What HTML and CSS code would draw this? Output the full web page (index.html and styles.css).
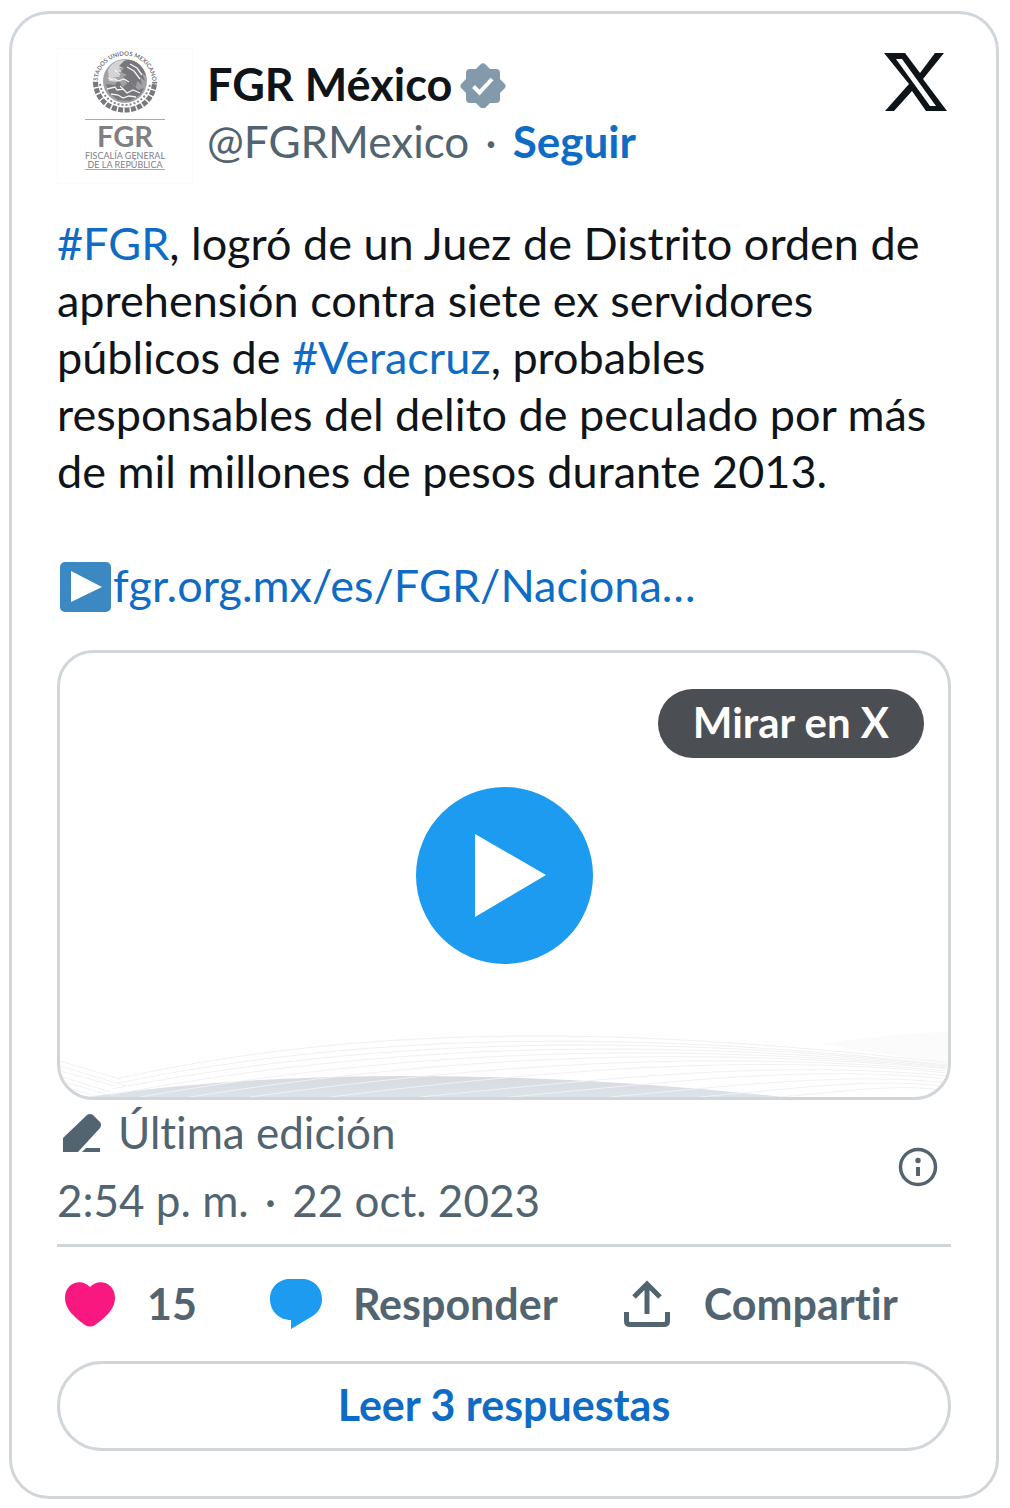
FILE: index.html
```html
<!DOCTYPE html>
<html lang="es">
<head>
<meta charset="utf-8">
<meta name="viewport" content="width=device-width, initial-scale=1">
<title>FGR México en X</title>
<link rel="stylesheet" href="styles.css">
</head>
<body>
<article class="card">
  <header class="head">
    <a class="avatar" href="#" aria-label="FGR México">
      <svg class="seal" viewBox="0 0 66 66" aria-hidden="true">
        <defs><path id="arc" d="M5.500 34 A27.500 27.500 0 1 1 60.500 34"/></defs>
        <text class="seal-text"><textPath href="#arc" startOffset="50%" text-anchor="middle">ESTADOS UNIDOS MEXICANOS</textPath></text>
        <circle cx="33" cy="32" r="22" fill="#a2a2a5"/>
        <path d="M16 21c4-8 13-12 20-9l-7 3 4 3-6 1 3 4-6 0 4 5-7 0 5 5-9-1z" fill="#d4d4d6"/>
        <path d="M32 12c9-4 20 5 22 15l-4-3 3 8-5-4 2 8-5-4-1 6-5-5-3 3-5-8 4-2-6-3 3-4-5-2z" fill="#77777c"/>
        <path d="M14 35l9 1 3-5 5 7 7-6 8 9 6-2-4 7-10 6-12-1-9-7z" fill="#77777c"/>
        <path d="M15 40l8-2 2 3 6-1 4 4 6-3 7 3M19 45l7 1 5 3 6-2 7 1M22 29l4 3 6-2 5 3M35 18l7 4 6 8M38 15l7 4 5 7M23 21l5 5M16 29l5 2M28 37l4 4" fill="none" stroke="#f5f5f5" stroke-width="1.300"/>
        <path d="M3.500 33C4 50 17 61 33 61S62 50 62.500 33" fill="none" stroke="#77777c" stroke-width="5" stroke-dasharray="5 1.400"/>
        <path d="M8 35c2 12 12 21 25 21s23-9 25-21" fill="none" stroke="#8a8a8e" stroke-width="2" stroke-dasharray="2 2"/>
      </svg>
      <span class="avatar-name">FGR</span>
      <span class="avatar-sub">FISCALÍA GENERAL<br>DE LA REPÚBLICA</span>
    </a>
    <div class="who">
      <a class="name" href="#">FGR México
        <svg class="badge" viewBox="0 0 46 46" role="img" aria-label="Cuenta verificada">
          <g fill="#829aab"><rect x="6" y="7" width="34" height="34" rx="4"/><rect x="6" y="7" width="34" height="34" rx="4" transform="rotate(45 23 24)"/></g>
          <path d="M13.500 24.500l6 6L32 17" fill="none" stroke="#fff" stroke-width="4"/>
        </svg>
      </a>
      <div class="handle"><a class="user" href="#">@FGRMexico</a><span>·</span><a class="follow" href="#">Seguir</a></div>
    </div>
    <a class="xlogo" href="#" aria-label="Ver en X">
      <svg viewBox="0 0 64 60"><path fill="#0f1419" fill-rule="evenodd" d="M0 0h21l15 20L51 0h9L39 26l24 32H42L28 38 10 58H1l24-27zM12 6h6l34 47h-6z"/></svg>
    </a>
  </header>

  <p class="text"><a href="#">#FGR</a>, logró de un Juez de Distrito orden de aprehensión contra siete ex servidores públicos de <a href="#">#Veracruz</a>, probables responsables del delito de peculado por más de mil millones de pesos durante 2013.<br><br><svg class="emoji" viewBox="0 0 52 52" role="img" aria-label="▶"><rect x="1" y="1" width="51" height="50" rx="5" fill="#3b88c3"/><path d="M12 10l31 16-31 15z" fill="#fff"/></svg><a href="#">fgr.org.mx/es/FGR/Naciona…</a></p>

  <div class="media">
    <svg class="waves" viewBox="0 0 888 72" preserveAspectRatio="none" aria-hidden="true">
      <defs><linearGradient id="hill" x1="0" y1="0" x2="0" y2="1"><stop offset="0" stop-color="#d9dade"/><stop offset="1" stop-color="#dbe3ea"/></linearGradient></defs>
      <path d="M760 19Q830 8 888 7v32Q820 28 760 19z" fill="#fbfbfb"/>
      <path d="M28 72Q170 51 350 51T722 72z" fill="url(#hill)"/>
      <g fill="none" stroke="#f1f1f3" stroke-width="1">
        <path d="M60 53C330-6 600 5 888 38M58 58C330 3 600 8 888 40M52 64C330 10 600 10 888 41M50 70C330 17 600 13 888 42M80 72C350 25 600 16 888 43M130 72C380 32 620 20 888 44M190 72C420 40 650 24 888 46M270 72C480 46 690 28 888 48M360 72C560 52 720 35 888 51M450 72C620 56 750 40 888 54M550 72C680 60 790 47 888 58M640 72C740 63 820 52 888 62M720 72C790 66 840 58 888 66"/>
        <path d="M0 36L60 54M0 41L66 61M0 46L55 61M0 51L50 67M0 56L46 69M0 61L36 71"/>
      </g>
    </svg>
    <a class="watch" href="#">Mirar en X</a>
    <button class="play" type="button" aria-label="Reproducir">
      <svg viewBox="0 0 177 177"><path d="M59 47l71 41-71 42z" fill="#fff"/></svg>
    </button>
  </div>

  <div class="meta">
    <div class="dates">
      <a class="edit" href="#">
        <svg viewBox="0 0 40 40" aria-hidden="true"><path fill="#536471" d="M1 39V25L25 2q3-2 6 0l7 7q2 3 0 6L16 39zM20 39l4-4h14v4z"/></svg>
        Última edición
      </a>
      <a class="time" href="#"><span>2:54 p. m.</span><span>·</span><span>22 oct. 2023</span></a>
    </div>
    <a class="info" href="#" aria-label="Información">
      <svg viewBox="0 0 40 40"><circle cx="20" cy="20" r="17.500" fill="none" stroke="#536471" stroke-width="3.500"/><circle cx="20" cy="13.500" r="2.700" fill="#536471"/><path d="M18 20h4v9h-4z" fill="#536471"/></svg>
    </a>
  </div>

  <div class="actions">
    <button class="action like" type="button">
      <svg viewBox="0 0 52 52" aria-hidden="true"><path fill="#f91880" d="M26 9C34 0 51 4 51 20c0 11-9 19-20 27q-5 3-10 0C10 39 1 31 1 20 1 4 18 0 26 9z"/></svg>
      15
    </button>
    <button class="action" type="button">
      <svg viewBox="0 0 52 52" aria-hidden="true"><path fill="#1d9bf0" d="M20 1h12c11 0 20 8 20 20 0 8-4 14-11 18L21 51V42C9 42 0 33 0 21S9 1 20 1z"/></svg>
      Responder
    </button>
    <button class="action" type="button">
      <svg viewBox="0 0 52 52" aria-hidden="true"><path fill="none" stroke="#536471" stroke-width="5" d="M26 36V7M13 19L26 6l13 13M5.500 34v9q0 3.500 3.500 3.500h34q3.500 0 3.500-3.500v-9"/></svg>
      Compartir
    </button>
  </div>

  <a class="replies" href="#">Leer 3 respuestas</a>
</article>
</body>
</html>
```
FILE: styles.css
```css
* { box-sizing: border-box; }

body {
  margin: 0;
  padding: 11px 11px 9px 9px;
  background: #fff;
  color: #0f1419;
  font-family: Lato, "Noto Sans", sans-serif;
  font-size: 44px;
  font-variant-ligatures: none;
  line-height: 57px;
}

a { color: #0f6cc4; text-decoration: none; }
svg { display: block; }
button { border: 0; padding: 0; background: none; color: inherit; font: inherit; cursor: pointer; }

.card {
  padding: 34px 45px 45px;
  border: 3px solid #d0d6da;
  border-radius: 40px;
}

.head { display: flex; gap: 14px; }

.avatar {
  display: flex;
  flex-direction: column;
  align-items: center;
  width: 136px;
  height: 136px;
  border: 1px solid #fafafa;
  color: #808084;
}
.seal { width: 66px; height: 66px; margin-bottom: 4px; }
.seal-text { fill: #77777c; font-size: 6px; font-weight: 700; }
.avatar-name {
  width: 80px;
  border-top: 1px solid #a9a9ac;
  font-size: 29px;
  font-weight: 700;
  line-height: 31px;
  text-align: center;
}
.avatar-sub {
  width: 80px;
  border-bottom: 1px solid #a9a9ac;
  font-size: 9px;
  line-height: 9px;
  text-align: center;
  white-space: nowrap;
}

.who { flex: 1; padding-top: 8px; }
.name { display: flex; align-items: center; gap: 8px; color: #0f1419; font-size: 45px; font-weight: 700; }
.badge { width: 46px; height: 46px; }
.handle { display: flex; gap: 16px; color: #536471; }
.user { color: #536471; }
.follow { font-weight: 700; }
.xlogo { padding: 5px 3px 0 0; }
.xlogo svg { width: 64px; height: 60px; }

.text { margin: 31px 0 36px; font-size: 45px; }
.emoji { display: inline-block; width: 52px; height: 52px; margin: 0 2px; vertical-align: -11px; }

.media {
  position: relative;
  display: flex;
  align-items: center;
  justify-content: center;
  height: 450px;
  border: 3px solid #d0d6da;
  border-radius: 36px;
  overflow: hidden;
}
.waves { position: absolute; left: 0; bottom: 0; width: 100%; height: 72px; }
.watch {
  position: absolute;
  top: 36px;
  right: 24px;
  padding: 0 35px 2px;
  border-radius: 35px;
  background: #4b4e53;
  color: #fff;
  font-size: 42px;
  font-weight: 700;
  line-height: 67px;
}
.play { width: 177px; height: 177px; border-radius: 50%; background: #1d9bf0; }

.meta {
  display: flex;
  align-items: center;
  justify-content: space-between;
  padding: 4px 13px 15px 0;
  border-bottom: 3px solid #d0d6da;
}
.dates { display: flex; flex-direction: column; gap: 11px; }
.edit, .time { display: flex; align-items: center; gap: 16px; color: #536471; }
.edit svg { width: 40px; height: 40px; margin-left: 5px; }
.info svg { width: 40px; height: 40px; }

.actions { display: flex; gap: 63px; padding: 28px 0 29px 7px; }
.action {
  display: flex;
  align-items: center;
  gap: 31px;
  color: #536471;
  font-size: 43px;
  font-weight: 700;
}
.action svg { width: 52px; height: 52px; }
.like { margin-right: 10px; }

.replies {
  display: block;
  padding-bottom: 2px;
  border: 3px solid #d0d6da;
  border-radius: 45px;
  font-size: 43px;
  font-weight: 700;
  line-height: 82px;
  text-align: center;
}
```
